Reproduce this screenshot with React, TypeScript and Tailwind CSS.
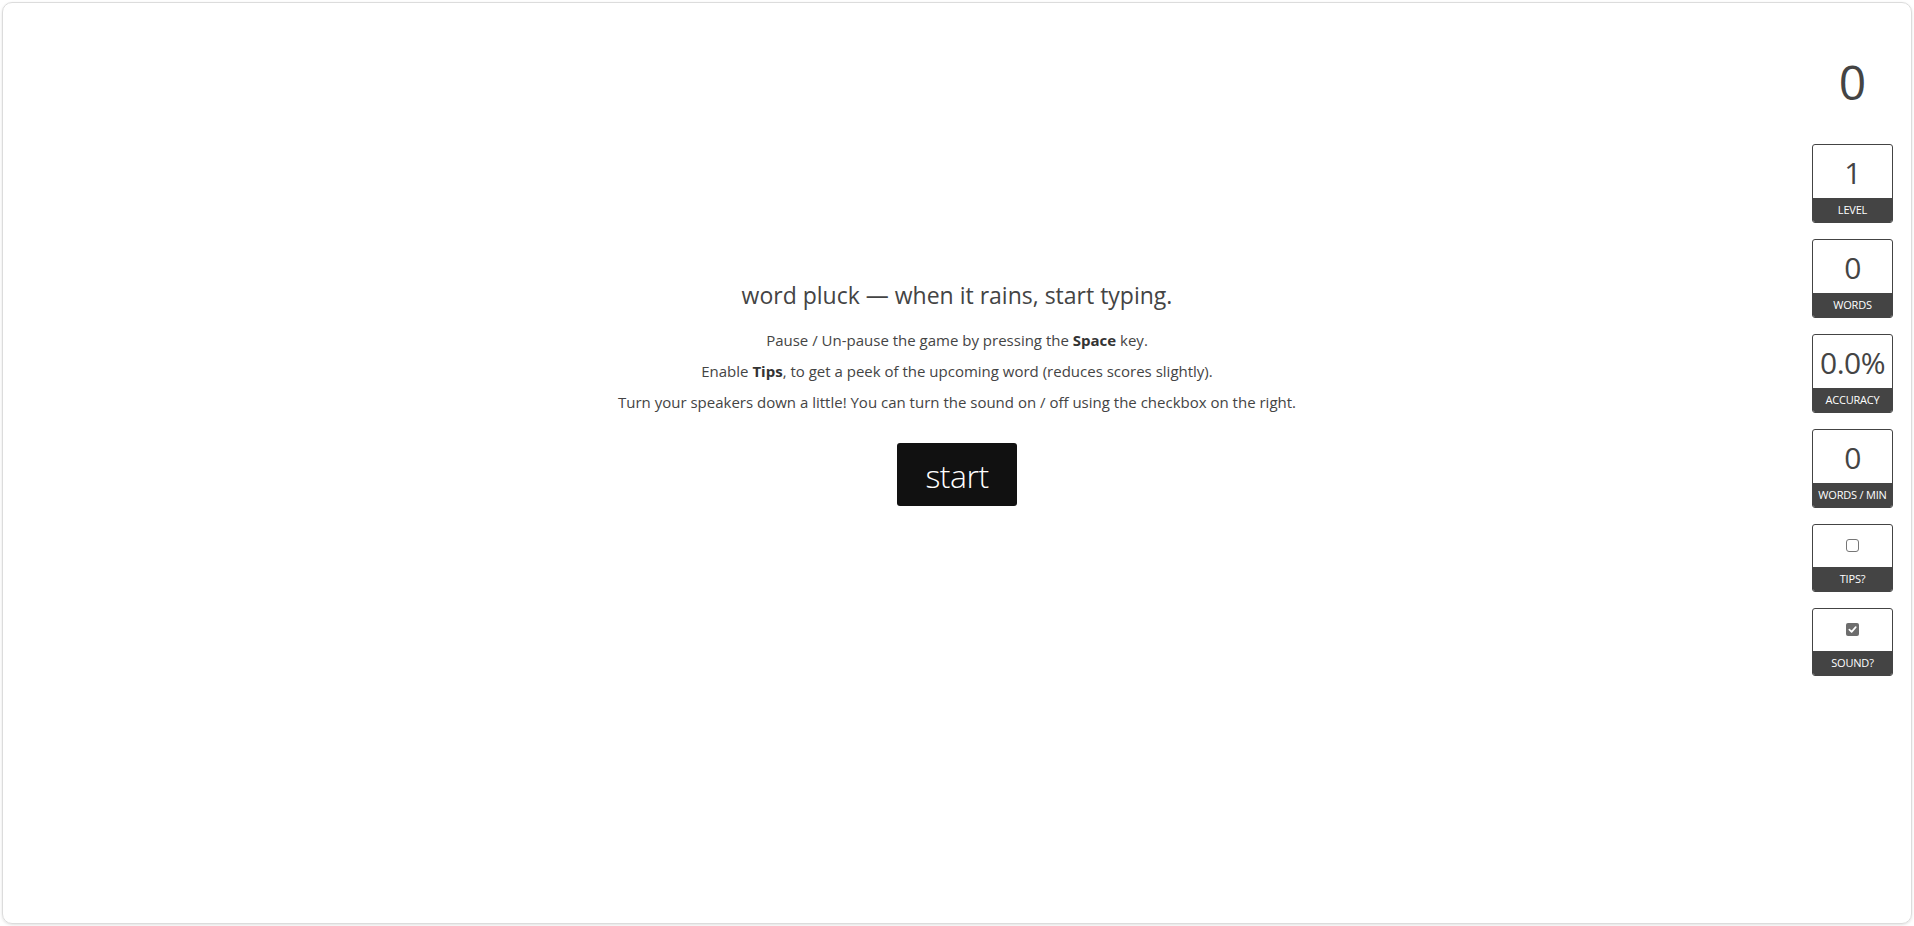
import React from "react";

const font = { fontFamily: '"Open Sans", "Noto Sans", sans-serif' };

function StatBox({ value, label }: { value: string; label: string }) {
  return (
    <div className="w-[81px] rounded-[3px] border border-[#444] overflow-hidden bg-white">
      <div className="h-[53px] flex items-center justify-center pt-[2px] text-[30px] leading-none text-[#444] tracking-[-0.5px]">
        {value}
      </div>
      <div className="h-[24px] bg-[#444] flex items-center justify-center text-[11px] text-white uppercase tracking-[-0.2px]">
        {label}
      </div>
    </div>
  );
}

function CheckBox({ checked, label }: { checked: boolean; label: string }) {
  return (
    <div className="w-[81px] rounded-[3px] border border-[#444] overflow-hidden bg-white">
      <div className="h-[42px] flex items-center justify-center pb-[1px]">
        {checked ? (
          <span className="w-[13px] h-[13px] rounded-[2px] bg-[#6d6d6d] flex items-center justify-center">
            <svg width="9" height="9" viewBox="0 0 10 10">
              <path d="M1.5 5.2 L4 7.6 L8.6 2.4" fill="none" stroke="white" strokeWidth="1.9" strokeLinecap="round" strokeLinejoin="round" />
            </svg>
          </span>
        ) : (
          <span className="w-[13px] h-[13px] rounded-[3px] border border-[#767676] bg-white" />
        )}
      </div>
      <div className="h-[24px] bg-[#444] flex items-center justify-center text-[11px] text-white uppercase tracking-[-0.2px]">
        {label}
      </div>
    </div>
  );
}

export default function App() {
  return (
    <div className="w-full h-[926px] p-[2px] bg-white" style={font}>
      <div className="h-full rounded-[10px] border border-[#dcdcdc] shadow-[0_1px_3px_rgba(0,0,0,0.12)] grid grid-cols-[1fr_auto_1fr]">
        <div />
        <div className="pt-[277px] flex flex-col items-center text-[#444]">
          <h1 className="text-[23px] leading-[30px] whitespace-nowrap">
            word pluck — when it rains, start typing.
          </h1>
          <div className="mt-[15px] text-[15px] leading-[31px] text-center whitespace-nowrap">
            <p>
              Pause / Un-pause the game by pressing the <b className="text-[#333]">Space</b> key.
            </p>
            <p>
              Enable <b className="text-[#333]">Tips</b>, to get a peek of the upcoming word (reduces scores slightly).
            </p>
            <p>Turn your speakers down a little! You can turn the sound on / off using the checkbox on the right.</p>
          </div>
          <button className="mt-[25px] w-[120px] h-[63px] rounded-[3px] bg-[#111] text-white text-[32px] font-light leading-none tracking-[-0.5px] pt-[3px]">
            start
          </button>
        </div>
        <div className="flex justify-end pr-[18px]">
          <div className="flex flex-col items-center pt-[55px] gap-[16px]">
            <div className="text-[48px] leading-none text-[#444] mb-[22px]">0</div>
            <StatBox value="1" label="Level" />
            <StatBox value="0" label="Words" />
            <StatBox value="0.0%" label="Accuracy" />
            <StatBox value="0" label="Words / Min" />
            <CheckBox checked={false} label="Tips?" />
            <CheckBox checked={true} label="Sound?" />
          </div>
        </div>
      </div>
    </div>
  );
}
